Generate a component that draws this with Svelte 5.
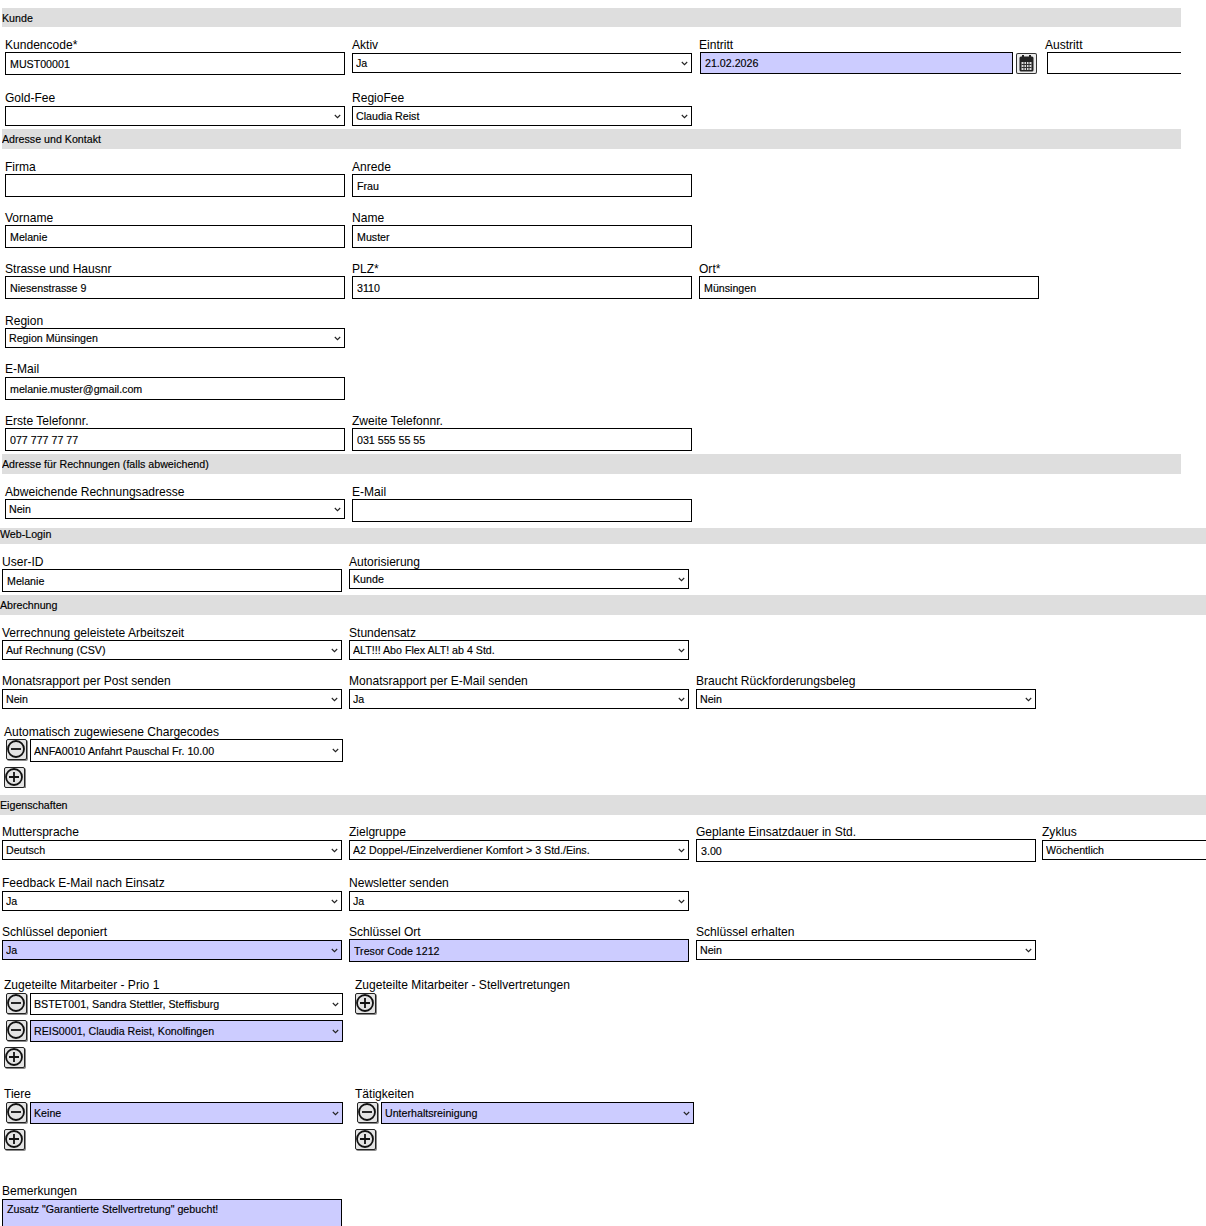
<script>
  const i = (label, value = '', extra = {}) => ({ label, value, kind: 'input', ...extra });
  const s = (label, value = '', extra = {}) => ({ label, value, kind: 'select', ...extra });
  const m = (label, items, extra = {}) => ({ label, items, kind: 'multi', ...extra });

  const sections = [
    { title: 'Kunde', mt: 8, h: 19, lh: 20, narrow: true, rows: [
      { mt: 10, fields: [i('Kundencode*', 'MUST00001'), s('Aktiv', 'Ja', { drop: true }), { label: 'Eintritt', value: '21.02.2026', kind: 'date' }, i('Austritt', '', { cls: 'austritt' })] },
      { mt: 16, up: true, fields: [s('Gold-Fee'), s('RegioFee', 'Claudia Reist')] }
    ] },
    { title: 'Adresse und Kontakt', mt: 3, h: 20, lh: 20, narrow: true, rows: [
      { mt: 10, fields: [i('Firma'), i('Anrede', 'Frau')] },
      { mt: 13, fields: [i('Vorname', 'Melanie'), i('Name', 'Muster')] },
      { mt: 13, fields: [i('Strasse und Hausnr', 'Niesenstrasse 9'), i('PLZ*', '3110'), i('Ort*', 'Münsingen')] },
      { mt: 14, fields: [s('Region', 'Region Münsingen')] },
      { mt: 14, up: true, fields: [i('E-Mail', 'melanie.muster@gmail.com')] },
      { mt: 13, fields: [i('Erste Telefonnr.', '077 777 77 77'), i('Zweite Telefonnr.', '031 555 55 55')] }
    ] },
    { title: 'Adresse für Rechnungen (falls abweichend)', mt: 3, h: 20, lh: 20, narrow: true, rows: [
      { mt: 10, fields: [s('Abweichende Rechnungsadresse', 'Nein'), i('E-Mail')] }
    ] },
    { title: 'Web-Login', mt: 6, h: 16, lh: 12, rows: [
      { mt: 10, fields: [i('User-ID', 'Melanie'), s('Autorisierung', 'Kunde')] }
    ] },
    { title: 'Abrechnung', mt: 3, h: 20, lh: 20, rows: [
      { mt: 10, fields: [s('Verrechnung geleistete Arbeitszeit', 'Auf Rechnung (CSV)'), s('Stundensatz', 'ALT!!! Abo Flex ALT! ab 4 Std.')] },
      { mt: 14, up: true, fields: [s('Monatsrapport per Post senden', 'Nein'), s('Monatsrapport per E-Mail senden', 'Ja'), s('Braucht Rückforderungsbeleg', 'Nein')] },
      { mt: 15, fields: [m('Automatisch zugewiesene Chargecodes', [{ v: 'ANFA0010 Anfahrt Pauschal Fr. 10.00', tall: true }])] }
    ] },
    { title: 'Eigenschaften', mt: 7, h: 20, lh: 20, rows: [
      { mt: 9, fields: [s('Muttersprache', 'Deutsch', { drop: true }), s('Zielgruppe', 'A2 Doppel-/Einzelverdiener Komfort > 3 Std./Eins.', { drop: true }), i('Geplante Einsatzdauer in Std.', '3.00'), s('Zyklus', 'Wöchentlich', { drop: true, cls: 'zyklus' })] },
      { mt: 14, up: true, fields: [s('Feedback E-Mail nach Einsatz', 'Ja'), s('Newsletter senden', 'Ja')] },
      { mt: 13, fields: [s('Schlüssel deponiert', 'Ja', { blue: true, drop: true }), i('Schlüssel Ort', 'Tresor Code 1212', { blue: true }), s('Schlüssel erhalten', 'Nein', { drop: true })] },
      { mt: 16, up: true, fields: [
        m('Zugeteilte Mitarbeiter - Prio 1', [{ v: 'BSTET001, Sandra Stettler, Steffisburg' }, { v: 'REIS0001, Claudia Reist, Konolfingen', blue: true }]),
        m('Zugeteilte Mitarbeiter - Stellvertretungen', [])
      ] },
      { mt: 19, up: true, fields: [
        m('Tiere', [{ v: 'Keine', blue: true }]),
        m('Tätigkeiten', [{ v: 'Unterhaltsreinigung', blue: true }])
      ] },
      { mt: 34, up: true, fields: [{ label: 'Bemerkungen', value: 'Zusatz "Garantierte Stellvertretung" gebucht!', kind: 'area' }] }
    ] }
  ];
</script>

{#snippet roundBtn(plus)}
  <button class="round" class:plus type="button" aria-label={plus ? 'Hinzufügen' : 'Entfernen'}>
    <svg viewBox="0 0 21 21" width="21" height="21">
      <circle cx="10" cy="10" r="8" fill="none" stroke="#111" stroke-width="1.8" />
      <path d={plus ? 'M5 10h10M10 5v10' : 'M5 10h10'} stroke="#111" stroke-width="1.8" fill="none" />
    </svg>
  </button>
{/snippet}

{#snippet sel(value, blue, cls)}
  <select class="ctl {cls}" class:blue>
    <option>{value}</option>
  </select>
{/snippet}

<div class="page">
  {#each sections as sec}
    <section class:narrow={sec.narrow} style:margin-top="{sec.mt}px">
      <h2 style:height="{sec.h}px" style:line-height="{sec.lh}px">{sec.title}</h2>
      {#each sec.rows as row}
        <div class="row" class:up={row.up} style:margin-top="{row.mt}px">
          {#each row.fields as f}
            {#if f.kind === 'multi'}
              <div class="field multi">
                <label for="">{f.label}</label>
                <div class="stack">
                  {#each f.items as it}
                    <div class="item">
                      {@render roundBtn(false)}
                      {@render sel(it.v, it.blue, it.tall ? 'grow tall' : 'grow')}
                    </div>
                  {/each}
                  {@render roundBtn(true)}
                </div>
              </div>
            {:else if f.kind === 'date'}
              <div class="field date">
                <label for="">{f.label}</label>
                <div class="dateline">
                  <input class="ctl blue" value={f.value} />
                  <button class="cal" type="button" aria-label="Kalender">
                    <svg viewBox="0 0 21 21" width="21" height="21">
                      <rect x="3.5" y="3.5" width="14" height="15" rx="1.5" fill="#222" />
                      <rect x="6" y="2" width="2" height="4" fill="#222" />
                      <rect x="13" y="2" width="2" height="4" fill="#222" />
                      <rect x="5.5" y="9" width="10" height="8" fill="#ddd" />
                      <path d="M5.5 11.5h10M5.5 14.5h10M8 9v8M10.5 9v8M13 9v8" stroke="#333" stroke-width="1" fill="none" />
                    </svg>
                  </button>
                </div>
              </div>
            {:else if f.kind === 'area'}
              <div class="field">
                <label for="">{f.label}</label>
                <textarea class="ctl area blue" value={f.value}></textarea>
              </div>
            {:else}
              <div class="field {f.cls ?? ''}">
                <label for="">{f.label}</label>
                {#if f.kind === 'input'}
                  <input class="ctl" class:blue={f.blue} value={f.value} />
                {:else}
                  {@render sel(f.value, f.blue, f.drop ? 'drop' : '')}
                {/if}
              </div>
            {/if}
          {/each}
        </div>
      {/each}
    </section>
  {/each}
</div>

<style>
  :global(body) {
    margin: 0;
    background: #fff;
    overflow: hidden;
  }
  .page {
    width: 1206px;
    height: 1226px;
    overflow: hidden;
    font-family: "Liberation Sans", Arial, sans-serif;
    color: #000;
    display: flow-root;
  }
  section {
    overflow: hidden;
  }
  section.narrow {
    width: 1179px;
    margin-left: 2px;
  }
  h2 {
    margin: 0;
    background: #dedede;
    font-size: 10.67px;
    font-weight: normal;
    -webkit-text-stroke: 0.15px #000;
  }
  .row {
    display: flex;
    gap: 7px;
    padding-left: 2px;
    width: 1500px;
  }
  .narrow .row {
    padding-left: 3px;
  }
  .field {
    width: 340px;
    flex: none;
    display: flex;
    flex-direction: column;
    align-items: flex-start;
  }
  label {
    display: block;
    height: 15px;
    line-height: 16px;
    font-size: 12.05px;
    white-space: nowrap;
  }
  .up label {
    line-height: 14px;
  }
  .ctl {
    box-sizing: border-box;
    flex: none;
    width: 340px;
    height: 23px;
    border: 1px solid #000;
    border-radius: 0;
    background-color: #fff;
    color: #000;
    font: 10.67px "Liberation Sans", Arial, sans-serif;
    -webkit-text-stroke: 0.15px #000;
    margin: 0;
    padding: 0 4px;
    outline: none;
  }
  select.ctl {
    height: 20px;
    padding: 0 14px 0 3px;
    appearance: none;
    -webkit-appearance: none;
    background-image: url("data:image/svg+xml,%3Csvg xmlns='http://www.w3.org/2000/svg' width='7' height='5'%3E%3Cpath d='M.8 1l2.7 2.7L6.2 1' fill='none' stroke='%23222' stroke-width='1.1'/%3E%3C/svg%3E");
    background-repeat: no-repeat;
    background-position: right 3px center;
  }
  select.drop {
    margin-top: 1px;
  }
  .blue {
    background-color: #ccccff;
  }
  .austritt {
    margin-left: -1px;
  }
  .austritt input {
    margin-left: 2px;
    height: 22px;
  }
  .zyklus {
    margin-left: -1px;
  }
  .dateline {
    display: flex;
    gap: 3px;
    padding-left: 1px;
  }
  .dateline input {
    width: 313px;
    height: 22px;
  }
  .cal {
    width: 21px;
    height: 21px;
    margin-top: 1px;
    padding: 0;
    border: 0;
    border-radius: 2px;
    background: #ececec;
    box-shadow: inset 0 0 0 1px #333;
    display: block;
  }
  .cal svg {
    display: block;
  }
  .multi {
    width: 342px;
    margin-left: 2px;
  }
  .stack {
    display: flex;
    flex-direction: column;
    gap: 5px;
    align-items: flex-start;
    width: 100%;
  }
  .item {
    display: flex;
    gap: 3px;
    padding-left: 2px;
    width: 100%;
    box-sizing: border-box;
  }
  .item select.grow {
    width: 313px;
    height: 22px;
  }
  .item select.tall {
    height: 23px;
  }
  .round {
    width: 21px;
    height: 21px;
    flex: none;
    padding: 0;
    border: 1px solid #222;
    border-radius: 2px;
    background: #e4e4e4;
    box-shadow: 1px 1px 0 #888;
    box-sizing: border-box;
    display: flex;
    align-items: center;
    justify-content: center;
  }
  .round svg {
    display: block;
    flex: none;
  }
  .area {
    height: 40px;
    padding: 3px 4px;
    resize: none;
    display: block;
  }
</style>
